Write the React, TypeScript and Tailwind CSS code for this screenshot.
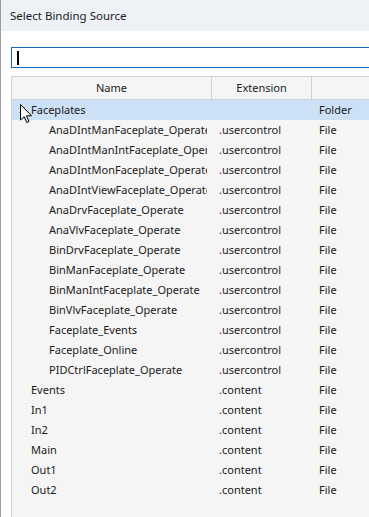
import React from 'react';

interface Row {
  name: string;
  ext: string;
  kind: string;
  depth: number;
  selected?: boolean;
  folder?: boolean;
}

const rows: Row[] = [
  { name: 'Faceplates', ext: '', kind: 'Folder', depth: 0, selected: true, folder: true },
  { name: 'AnaDIntManFaceplate_Operate', ext: '.usercontrol', kind: 'File', depth: 1 },
  { name: 'AnaDIntManIntFaceplate_Operate', ext: '.usercontrol', kind: 'File', depth: 1 },
  { name: 'AnaDIntMonFaceplate_Operate', ext: '.usercontrol', kind: 'File', depth: 1 },
  { name: 'AnaDIntViewFaceplate_Operate', ext: '.usercontrol', kind: 'File', depth: 1 },
  { name: 'AnaDrvFaceplate_Operate', ext: '.usercontrol', kind: 'File', depth: 1 },
  { name: 'AnaVlvFaceplate_Operate', ext: '.usercontrol', kind: 'File', depth: 1 },
  { name: 'BinDrvFaceplate_Operate', ext: '.usercontrol', kind: 'File', depth: 1 },
  { name: 'BinManFaceplate_Operate', ext: '.usercontrol', kind: 'File', depth: 1 },
  { name: 'BinManIntFaceplate_Operate', ext: '.usercontrol', kind: 'File', depth: 1 },
  { name: 'BinVlvFaceplate_Operate', ext: '.usercontrol', kind: 'File', depth: 1 },
  { name: 'Faceplate_Events', ext: '.usercontrol', kind: 'File', depth: 1 },
  { name: 'Faceplate_Online', ext: '.usercontrol', kind: 'File', depth: 1 },
  { name: 'PIDCtrlFaceplate_Operate', ext: '.usercontrol', kind: 'File', depth: 1 },
  { name: 'Events', ext: '.content', kind: 'File', depth: 0 },
  { name: 'In1', ext: '.content', kind: 'File', depth: 0 },
  { name: 'In2', ext: '.content', kind: 'File', depth: 0 },
  { name: 'Main', ext: '.content', kind: 'File', depth: 0 },
  { name: 'Out1', ext: '.content', kind: 'File', depth: 0 },
  { name: 'Out2', ext: '.content', kind: 'File', depth: 0 },
];

const Cursor = () => (
  <svg className="absolute left-[19px] top-[104px]" width="13" height="20" viewBox="0 0 13 20">
    <path
      d="M0.5 0.5 L0.5 16 L4.2 12.6 L6.8 18.6 L9 17.6 L6.5 11.8 L11.5 11.8 Z"
      fill="#ffffff"
      stroke="#000000"
      strokeWidth="1"
      strokeLinejoin="round"
    />
  </svg>
);

const App: React.FC = () => {
  return (
    <div
      className="relative w-[369px] h-[517px] overflow-hidden bg-white flex flex-col border-l border-[#9c9c9c] text-[11px] text-[#1a1a1a]"
      style={{ fontFamily: '"Noto Sans", "Open Sans", sans-serif' }}
    >
      <div className="h-[31px] shrink-0 bg-[#eef2f7] flex items-center pl-[9px] text-[11.5px]">
        Select Binding Source
      </div>

      <div className="flex-1 flex flex-col pl-[10px] pt-[16px] min-h-0">
        <div className="h-[21px] shrink-0 border border-r-0 border-[#1c6cb9] flex items-center pl-[5px]">
          <div className="w-[1.5px] h-[14px] bg-black" />
        </div>

        <div className="mt-[8px] flex-1 border-l border-t border-[#d2d0dc] bg-[#f5f5f5] min-h-0">
          <div className="h-[23px] flex border-b border-[#d2d0dc]">
            <div className="w-[200px] shrink-0 flex items-center justify-center border-r border-[#d2d0dc]">Name</div>
            <div className="w-[100px] shrink-0 flex items-center justify-center border-r border-[#d2d0dc]">Extension</div>
            <div className="flex-1" />
          </div>

          <div className="flex flex-col">
            {rows.map((r) => (
              <div
                key={r.name}
                className={`h-[20px] flex items-center ${r.selected ? 'bg-[#cce0f6]' : ''}`}
              >
                <div
                  className={`w-[195px] mr-[5px] shrink-0 whitespace-nowrap overflow-hidden ${
                    r.depth === 1 ? 'pl-[37px]' : 'pl-[19px]'
                  }`}
                >
                  {r.folder && (
                    <svg className="absolute left-[17px] top-[106px]" width="8" height="8" viewBox="0 0 8 8">
                      <path d="M7 1 L7 7 L1 7 Z" fill="#1f6fc5" />
                    </svg>
                  )}
                  {r.name}
                </div>
                <div className="w-[100px] shrink-0 pl-[7px] whitespace-nowrap overflow-hidden">{r.ext}</div>
                <div className="flex-1 pl-[7px] whitespace-nowrap">{r.kind}</div>
              </div>
            ))}
          </div>
        </div>
      </div>

      <Cursor />
    </div>
  );
};

export default App;
